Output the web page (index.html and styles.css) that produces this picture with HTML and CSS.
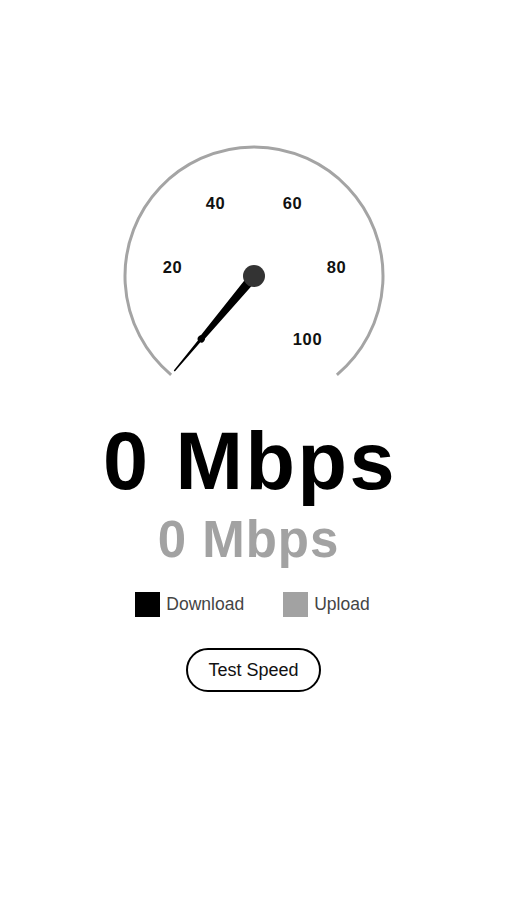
FILE: index.html
```html
<!DOCTYPE html>
<html>
<head>
<meta charset="utf-8">
<link rel="stylesheet" href="styles.css">
</head>
<body>
<main class="app">
  <svg class="gauge" width="280" height="245" viewBox="0 0 280 245">
    <path class="arc" d="M 57.1 234.8 A 129 129 0 1 1 222.9 234.8"/>
    <g class="labels">
      <text x="58.5" y="127">20</text>
      <text x="101.5" y="63">40</text>
      <text x="178.5" y="63">60</text>
      <text x="222.5" y="127">80</text>
      <text x="193.5" y="199">100</text>
    </g>
    <g transform="translate(140 136) rotate(130)">
      <polygon class="needle" points="0,-4.8 82,-2.6 82,-1.6 124,-0.7 124,0.7 82,1.6 82,2.6 0,4.8"/>
      <circle class="needle" cx="82" cy="0" r="3.6"/>
    </g>
    <circle class="hub" cx="140" cy="136" r="11"/>
  </svg>
  <div class="download-speed">0 Mbps</div>
  <div class="upload-speed">0 Mbps</div>
  <div class="legend">
    <div class="legend-item"><span class="swatch swatch-down"></span><span>Download</span></div>
    <div class="legend-item"><span class="swatch swatch-up"></span><span>Upload</span></div>
  </div>
  <button class="test-btn">Test Speed</button>
</main>
</body>
</html>
```
FILE: styles.css
```css
html, body {
  margin: 0;
  padding: 0;
  background: #ffffff;
}
body {
  font-family: "Liberation Sans", Arial, sans-serif;
  color: #000;
}
.app {
  display: flex;
  flex-direction: column;
  align-items: center;
  padding-top: 140px;
}
.gauge {
  display: block;
  margin-left: 1px;
}
.arc {
  fill: none;
  stroke: #a4a4a4;
  stroke-width: 3;
}
.labels text {
  font-family: "Liberation Sans", Arial, sans-serif;
  font-weight: bold;
  font-size: 16.5px;
  letter-spacing: 0.6px;
  fill: #111;
  text-anchor: middle;
  dominant-baseline: central;
}
.needle {
  fill: #000;
}
.hub {
  fill: #333;
}
.download-speed {
  margin-top: 36px;
  margin-right: 7px;
  font-size: 81px;
  line-height: 80px;
  font-weight: bold;
  letter-spacing: 2.5px;
  color: #000;
  white-space: nowrap;
}
.upload-speed {
  margin-top: 13px;
  margin-right: 10px;
  font-size: 51px;
  line-height: 51px;
  font-weight: bold;
  letter-spacing: 1px;
  color: #a2a2a2;
  white-space: nowrap;
}
.legend {
  margin-top: 27px;
  margin-right: 2px;
  display: flex;
  gap: 39px;
  align-items: center;
}
.legend-item {
  display: flex;
  align-items: center;
  gap: 6px;
  font-size: 17.5px;
  color: #444;
}
.swatch {
  display: block;
  width: 25px;
  height: 25px;
}
.swatch-down {
  background: #000;
}
.swatch-up {
  background: #a2a2a2;
}
.test-btn {
  margin-top: 31px;
  width: 135px;
  height: 44px;
  border: 2px solid #000;
  border-radius: 22px;
  background: #fff;
  font-family: "Liberation Sans", Arial, sans-serif;
  font-size: 18px;
  color: #111;
  padding: 0;
}
```
